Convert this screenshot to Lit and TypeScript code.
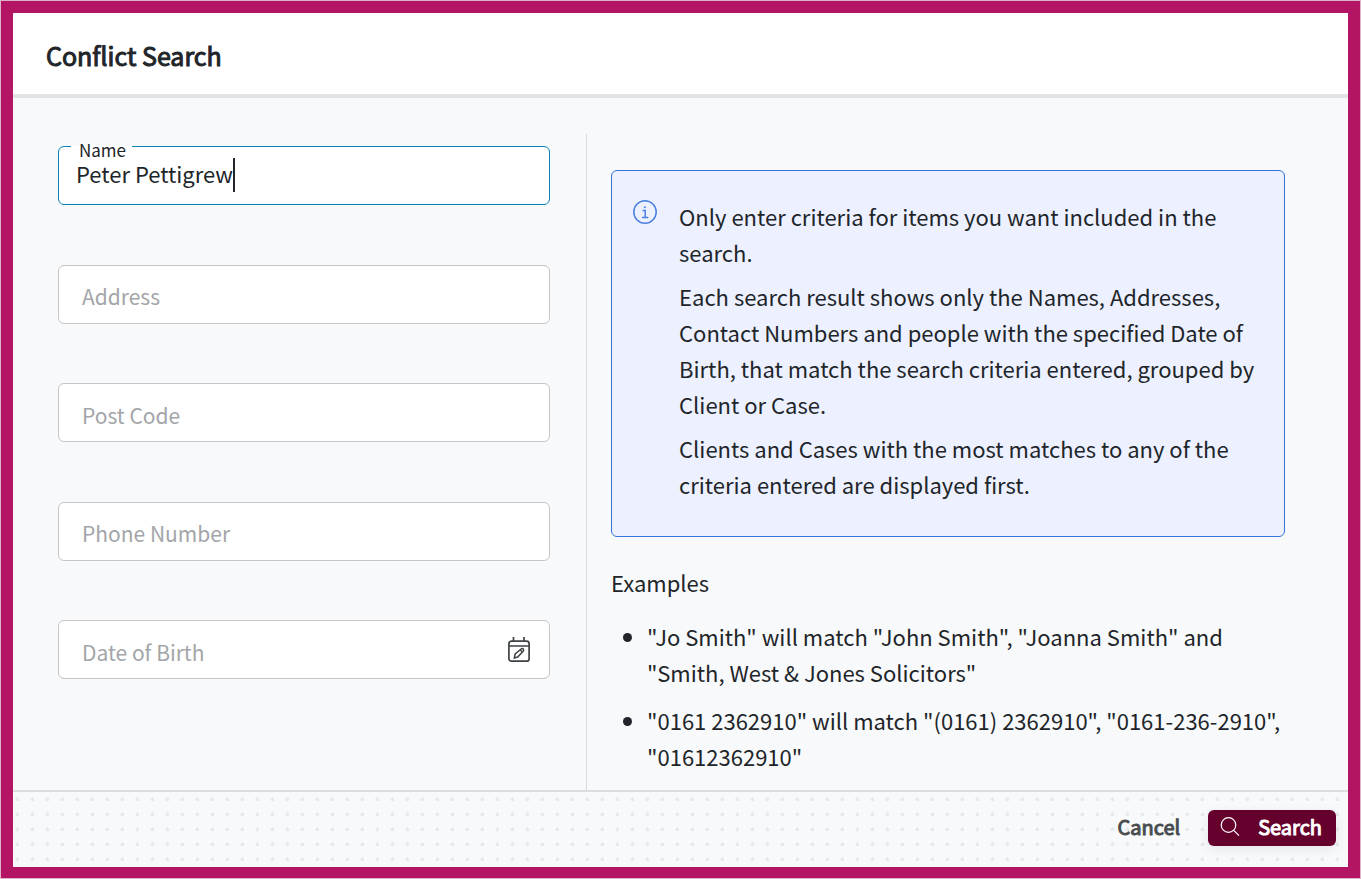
import { LitElement, html, css } from "lit";
import { customElement, state } from "lit/decorators.js";

interface Field {
  id: string;
  label: string;
}

const FIELDS: Field[] = [
  { id: "address", label: "Address" },
  { id: "post-code", label: "Post Code" },
  { id: "phone", label: "Phone Number" },
];

@customElement("app-root")
export class AppRoot extends LitElement {
  @state() private name = "Peter Pettigrew";

  static styles = css`
    :host {
      display: block;
      font-family: "Noto Sans CJK SC", "Noto Sans", sans-serif;
      font-size: 22px;
      line-height: 36px;
      color: #212529;
    }
    * {
      box-sizing: border-box;
    }
    .frame {
      min-height: 100vh;
      display: flex;
      border: 1px solid #e0b4c8;
      background: #b31464;
      padding: 12px 12px 11px;
    }
    .dialog {
      flex: 1;
      display: flex;
      flex-direction: column;
      background: #f8f9fb;
    }
    header {
      background: #fff;
      border-bottom: 4px solid #e0e4e4;
      padding: 24px 33px 21px;
    }
    h1 {
      margin: 0;
      font-size: 25px;
      line-height: 36px;
      font-weight: 400;
      -webkit-text-stroke: 1px currentColor;
    }
    .body {
      flex: 1;
      display: grid;
      grid-template-columns: 43fr 57fr;
      padding-top: 36px;
    }
    form {
      display: flex;
      flex-direction: column;
      justify-content: space-between;
      padding: 12px 36px 111px 45px;
      border-right: 1px solid #d9dbdd;
    }
    .field {
      position: relative;
      display: flex;
      align-items: center;
      height: 59px;
      border: 1px solid #c4c6c8;
      border-radius: 6px;
      background: #fff;
    }
    input {
      font: inherit;
      color: inherit;
      border: 0;
      padding: 0;
      margin: 0;
      background: none;
      outline: 0;
      min-width: 0;
    }
    .field input {
      flex: 1;
      padding: 2px 23px 0;
      height: 57px;
    }
    .field input::placeholder {
      color: #a3a5a8;
      font-size: 21px;
      opacity: 1;
    }
    .field.active {
      border-color: #0784b5;
    }
    .field.active input {
      flex: none;
      field-sizing: content;
      padding: 0 0 6px 17px;
    }
    .caret {
      width: 2px;
      height: 34px;
      margin-bottom: 2px;
      background: #212529;
    }
    .float {
      position: absolute;
      left: 12px;
      top: -10px;
      padding: 0 6px 0 8px;
      font-size: 17px;
      line-height: 26px;
      background: linear-gradient(#f8f9fb 9px, #fff 9px);
    }
    button {
      font: inherit;
      border: 0;
      background: none;
      color: inherit;
      padding: 0;
      cursor: pointer;
    }
    svg {
      display: block;
      fill: none;
      stroke: currentColor;
    }
    .pick {
      margin-right: 18px;
      color: #3f4346;
    }
    .help {
      padding: 36px 63px 12px 24px;
    }
    .note {
      display: flex;
      gap: 22px;
      padding: 27px 24px 34px 21px;
      border: 1px solid #3474dc;
      border-radius: 6px;
      background: #ecf0ff;
    }
    .note svg {
      flex: none;
      margin-top: 2px;
      color: #4a80e0;
    }
    p {
      margin: 0;
    }
    .note p + p {
      margin-top: 8px;
    }
    h2 {
      margin: 27px 0 18px;
      font-size: 22px;
      line-height: 36px;
      font-weight: 400;
    }
    ul {
      margin: 0;
      padding-left: 36px;
    }
    li + li {
      margin-top: 12px;
    }
    footer {
      display: flex;
      justify-content: flex-end;
      align-items: center;
      gap: 28px;
      border-top: 2px solid #dcdfe1;
      padding: 18px 12px 21px;
      font-size: 20px;
      line-height: 34px;
      background: radial-gradient(circle, #e4ebee 2px, transparent 2px) -3px 0 / 15px 15px;
    }
    footer button {
      padding-bottom: 2px;
      -webkit-text-stroke: 1px currentColor;
    }
    .cancel {
      color: #484c4e;
    }
    .search {
      display: flex;
      align-items: center;
      gap: 18px;
      padding: 0 14px 2px 12px;
      border-radius: 6px;
      background: #65002d;
      color: #fff;
      box-shadow: 0 3px 12px rgba(0, 0, 0, 0.08);
    }
  `;

  render() {
    return html`
      <div class="frame">
        <main class="dialog">
          <header><h1>Conflict Search</h1></header>
          <div class="body">
            <form id="criteria" @submit=${(e: Event) => e.preventDefault()}>
              <div class="field active">
                <label class="float" for="name">Name</label>
                <input id="name" type="text" .value=${this.name}
                  @input=${(e: Event) => (this.name = (e.target as HTMLInputElement).value)} />
                <span class="caret"></span>
              </div>
              ${FIELDS.map(
                (f) => html`<div class="field">
                  <input id=${f.id} type="text" placeholder=${f.label} aria-label=${f.label} />
                </div>`
              )}
              <div class="field">
                <input id="dob" type="text" placeholder="Date of Birth" aria-label="Date of Birth" />
                <button class="pick" type="button" aria-label="Choose date">
                  <svg width="24" height="26" viewBox="0 0 24 26" stroke-width="1.7">
                    <rect x="1.9" y="4.2" width="20.2" height="20" rx="2.5" />
                    <path d="M1.9 9H22M6.5 0v4M17 0v4" />
                    <path stroke-width="1.5" d="M7.3 21l.9-4 6.2-5.2q1.3-.6 2 .4.6 1-.1 1.8l-5.6 6zM13.3 13l2.2 2" />
                  </svg>
                </button>
              </div>
            </form>
            <section class="help">
              <div class="note">
                <svg width="24" height="24" viewBox="0 0 24 24" stroke-width="1.5">
                  <circle cx="12" cy="12" r="11.2" />
                  <path d="M9.5 10.5h2.7v6.8M9 17.4h6.3" />
                  <circle cx="11.9" cy="7.2" r="1" fill="currentColor" stroke="none" />
                </svg>
                <div>
                  <p>Only enter criteria for items you want included in the search.</p>
                  <p>Each search result shows only the Names, Addresses, Contact Numbers and people with the specified Date of Birth, that match the search criteria entered, grouped by Client or Case.</p>
                  <p>Clients and Cases with the most matches to any of the criteria entered are displayed first.</p>
                </div>
              </div>
              <h2>Examples</h2>
              <ul>
                <li>"Jo Smith" will match "John Smith", "Joanna Smith" and "Smith, West &amp; Jones Solicitors"</li>
                <li>"0161 2362910" will match "(0161) 2362910", "0161-236-2910", "01612362910"</li>
              </ul>
            </section>
          </div>
          <footer>
            <button class="cancel" type="button">Cancel</button>
            <button class="search" type="submit" form="criteria">
              <svg width="20" height="20" viewBox="0 0 20 20" stroke-width="1.2">
                <circle cx="8.500" cy="8" r="7.300" />
                <path d="M13.500 13.200l5.500 5.500" />
              </svg>
              Search
            </button>
          </footer>
        </main>
      </div>
    `;
  }
}
